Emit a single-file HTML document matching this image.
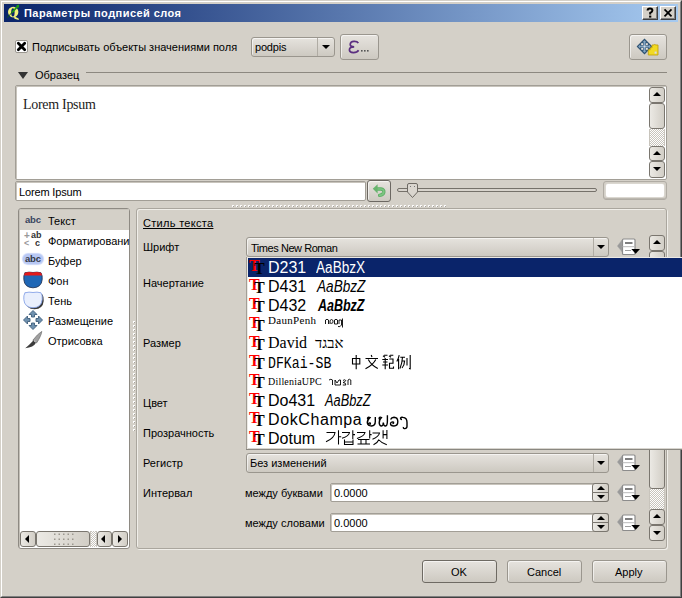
<!DOCTYPE html>
<html><head><meta charset="utf-8">
<style>
*{box-sizing:border-box;margin:0;padding:0}
html,body{width:682px;height:598px;overflow:hidden;background:#d4d0c8;font-family:"Liberation Sans",sans-serif;font-size:11px;color:#000}
.a{position:absolute}
svg{position:absolute;overflow:visible}
#win{left:0;top:0;width:682px;height:598px;border-style:solid;border-width:1px;border-color:#d4d0c8 #404040 #404040 #d4d0c8}
#win2{left:1px;top:1px;width:680px;height:596px;border-style:solid;border-width:1px;border-color:#fff #808080 #808080 #fff}
#title{left:4px;top:4px;width:674px;height:18px;background:linear-gradient(to right,#0a246a,#a6caf0)}
.tb{width:16px;height:14px;background:#d4d0c8;border-style:solid;border-width:1px;border-color:#fff #404040 #404040 #fff;box-shadow:inset -1px -1px 0 #808080}
.t{white-space:nowrap;line-height:13px}
.btn{border:1px solid #9a968e;border-radius:3px;background:linear-gradient(#e6e3de,#cdc9c1);box-shadow:inset 1px 1px 0 rgba(255,255,255,.6)}
.field{background:#fff;border:1px solid #a29e96;border-radius:2px;box-shadow:inset 1px 1px 0 #c8c4bc}
.frame{border:1px solid #aaa69e;border-radius:3px;box-shadow:inset 1px 1px 0 #f0eee9, 1px 1px 0 #f0eee9}
.sbtn{width:16px;border:1px solid #7a766f;border-radius:3px;background:linear-gradient(to right,#ebe9e4,#d2cec6)}
.chk{box-shadow:inset 1px 0 0 #c8c4bc,inset -1px 0 0 #c8c4bc;background-color:#fff;background-image:linear-gradient(45deg,#c8c4bc 25%,transparent 25%,transparent 75%,#c8c4bc 75%),linear-gradient(45deg,#c8c4bc 25%,transparent 25%,transparent 75%,#c8c4bc 75%);background-size:2px 2px;background-position:0 0,1px 1px}
.up{width:0;height:0;border-left:4px solid transparent;border-right:4px solid transparent;border-bottom:4px solid #000}
.dn{width:0;height:0;border-left:4px solid transparent;border-right:4px solid transparent;border-top:4px solid #000}
.lt{width:0;height:0;border-top:4px solid transparent;border-bottom:4px solid transparent;border-right:4px solid #000}
.rt{width:0;height:0;border-top:4px solid transparent;border-bottom:4px solid transparent;border-left:4px solid #000}
.dd .row{position:absolute;left:0;width:434px;height:19px}
.ff{font-size:16px;line-height:19px;white-space:nowrap;position:absolute;left:22px}
</style></head><body>
<div id="win" class="a"></div>
<div id="win2" class="a"></div>
<div id="title" class="a"></div>
<!-- Q icon -->
<svg style="left:0;top:0" width="24" height="24" viewBox="0 0 24 24">
 <ellipse cx="13.2" cy="12.1" rx="5.2" ry="5.3" fill="#f2f27c"/>
 <ellipse cx="12.9" cy="12.4" rx="1.7" ry="4.1" fill="#0c266c"/>
 <path d="M13.8 16 L18.6 18.4 L18.8 20 L14.5 18.8 Z" fill="#f2f27c"/>
 <path d="M7.2 17.7 L13 11.3" stroke="#116010" stroke-width="1"/>
 <path d="M12 12.5 L18.6 5.4" stroke="#1c9c12" stroke-width="1.8"/>
 <path d="M16.2 5.6 L19.2 4.6 L18.6 8 Z" fill="#1c9c12"/>
</svg>
<div class="a t" style="left:24px;top:7px;color:#fff;font-weight:bold;font-size:11px;letter-spacing:0.45px">Параметры подписей слоя</div>
<div class="a tb" style="left:642px;top:6px"></div>
<div class="a tb" style="left:660px;top:6px"></div>
<svg style="left:642px;top:6px" width="16" height="14" viewBox="0 0 16 14"><path d="M5.6 4.6 Q5.6 2.6 8 2.6 Q10.4 2.6 10.4 4.6 Q10.4 6 8.2 7 L8.2 8.6" fill="none" stroke="#000" stroke-width="2"/><rect x="7.1" y="9.6" width="2.2" height="2" fill="#000"/></svg>
<svg style="left:660px;top:6px" width="16" height="14"><path d="M4.5 3.3 L11.5 10.3 M11.5 3.3 L4.5 10.3" stroke="#000" stroke-width="1.7"/></svg>

<!-- checkbox row -->
<div class="a" style="left:15px;top:40px;width:13px;height:13px;background:#fff;border:1px solid #9a968f;border-radius:2px"></div>
<svg style="left:15px;top:40px" width="13" height="13"><path d="M3.3 3.3 L9.7 9.7 M9.7 3.3 L3.3 9.7" stroke="#000" stroke-width="2.8" stroke-linecap="round"/></svg>
<div class="a t" style="left:32px;top:41px">Подписывать объекты значениями поля</div>
<div class="a btn" style="left:251px;top:37px;width:84px;height:20px"></div>
<div class="a" style="left:317px;top:38px;width:1px;height:18px;background:#b0aca4"></div>
<div class="a dn" style="left:322px;top:45px"></div>
<div class="a t" style="left:255px;top:41px;letter-spacing:-0.2px">podpis</div>
<div class="a btn" style="left:340px;top:34px;width:39px;height:26px"></div>
<svg style="left:340px;top:34px" width="40" height="26" viewBox="0 0 40 26">
 <path d="M18.3 9.2 C17 6.5 10.5 6.5 10.2 10.2 C10 12.5 12.5 12.8 14.2 12.8 C11.5 12.8 9.3 13.8 9.4 16 C9.6 19.3 16.5 19.5 18.6 16.2" fill="none" stroke="#5b2f80" stroke-width="1.7"/>
 <rect x="21" y="16" width="1.6" height="1.6" fill="#555"/><rect x="24" y="16" width="1.6" height="1.6" fill="#555"/><rect x="27" y="16" width="1.6" height="1.6" fill="#555"/>
</svg>
<div class="a btn" style="left:629px;top:34px;width:38px;height:26px"></div>
<svg style="left:629px;top:34px" width="38" height="26" viewBox="0 0 38 26">
 <path d="M15.5 4.6 L23.4 12.5 L15.5 20.4 L7.6 12.5 Z" fill="#2e5272"/>
 <path d="M15.5 6.2 L17.5 8.2 L16.3 8.2 L16.3 11.7 L19.8 11.7 L19.8 10.5 L21.8 12.5 L19.8 14.5 L19.8 13.3 L16.3 13.3 L16.3 16.8 L17.5 16.8 L15.5 18.8 L13.5 16.8 L14.7 16.8 L14.7 13.3 L11.2 13.3 L11.2 14.5 L9.2 12.5 L11.2 10.5 L11.2 11.7 L14.7 11.7 L14.7 8.2 L13.5 8.2 Z" fill="#84a6c4"/>
 <rect x="12.2" y="9.2" width="2" height="2" fill="#e6e2da"/><rect x="16.8" y="9.2" width="2" height="2" fill="#e6e2da"/>
 <rect x="12.2" y="13.8" width="2" height="2" fill="#e6e2da"/><rect x="16.8" y="13.8" width="2" height="2" fill="#e6e2da"/>
 <rect x="14.6" y="11.6" width="1.8" height="1.8" fill="#d8dce0"/>
 <path d="M19.3 15.8 L21.2 15.8 L21.2 14 Q22.2 13.2 23 14 L23 11 L25 11 L25 10.8 Q25.8 10.2 26.6 10.8 L26.6 11 L29 11 L29 21 L19.3 21 Z" fill="#f2da22" stroke="#c4a410" stroke-width="0.9"/>
 <rect x="25.6" y="17.6" width="2" height="2" fill="#d8d8f0"/>
</svg>

<!-- header -->
<div class="a dn" style="left:18px;top:72px;border-left-width:5px;border-right-width:5px;border-top-width:7px;border-top-color:#333"></div>
<div class="a t" style="left:35px;top:69px">Образец</div>
<div class="a" style="left:86px;top:72px;width:581px;height:1px;background:#8c8880"></div>

<!-- preview -->
<div class="a field" style="left:15px;top:85px;width:652px;height:95px"></div>
<div class="a t" style="left:23px;top:97px;font-family:'Liberation Serif',serif;font-size:14px;line-height:16px;letter-spacing:-0.3px;color:#222">Lorem Ipsum</div>
<div class="a sbtn" style="left:649px;top:87px;height:16px"></div>
<div class="a up" style="left:653px;top:92px"></div>
<div class="a sbtn" style="left:649px;top:103px;height:26px"></div>
<div class="a chk" style="left:649px;top:129px;width:16px;height:17px"></div>
<div class="a sbtn" style="left:649px;top:146px;height:15px"></div>
<div class="a up" style="left:653px;top:151px"></div>
<div class="a sbtn" style="left:649px;top:161px;height:17px"></div>
<div class="a dn" style="left:653px;top:167px"></div>

<!-- text field row -->
<div class="a field" style="left:15px;top:181px;width:351px;height:20px"></div>
<div class="a t" style="left:19px;top:186px;letter-spacing:-0.15px">Lorem Ipsum</div>
<div class="a btn" style="left:367px;top:180px;width:24px;height:22px;border-color:#6c6862"></div>
<svg style="left:367px;top:180px" width="24" height="22" viewBox="0 0 24 22">
 <path d="M9.5 9 L14 9 Q17.2 9.3 16.8 12.3 Q16.4 14.8 12.6 15.4" fill="none" stroke="#5fae66" stroke-width="3.4" stroke-linecap="round"/>
 <path d="M9.5 9 L14 9 Q17.2 9.3 16.8 12.3 Q16.4 14.8 12.6 15.4" fill="none" stroke="#7cc682" stroke-width="1.6" stroke-linecap="round"/>
 <path d="M5.8 8.8 L10.6 4.2 L10.6 13.4 Z" fill="#68b46e"/>
</svg>
<div class="a" style="left:397px;top:188px;width:200px;height:4px;border:1px solid #75716a;border-radius:2px;background:#d8d4cd"></div>
<svg style="left:406px;top:182px" width="13" height="17" viewBox="0 0 13 17">
 <path d="M1.5 3 Q1.5 1.5 3 1.5 L10 1.5 Q11.5 1.5 11.5 3 L11.5 10 L6.5 15.5 L1.5 10 Z" fill="#dad6cf" stroke="#6e6a64" stroke-width="1"/>
 <rect x="4" y="4" width="1" height="1" fill="#777"/><rect x="8" y="4" width="1" height="1" fill="#777"/>
</svg>
<div class="a" style="left:603px;top:181px;width:64px;height:19px;border:1px solid #b0aca4;border-radius:3px;background:#d4d0c8;box-shadow:inset 0 -1px 0 #bcb8b0"></div>
<div class="a" style="left:606px;top:184px;width:58px;height:13px;background:#fff;border-radius:2px;box-shadow:0 0 0 0.5px #e0ddd8"></div>
<!-- splitter dots -->
<div class="a" style="left:232px;top:205px;width:214px;height:2px;background-image:linear-gradient(to right,#fff 2px,transparent 2px);background-size:4px 2px;opacity:.9"></div>
<div class="a" style="left:232px;top:206px;width:214px;height:1px;background-image:linear-gradient(to right,#a8a49c 1px,transparent 1px);background-size:4px 1px;background-position:1px 0"></div>

<!-- list -->
<div class="a field" style="left:18px;top:208px;width:112px;height:341px;border-radius:3px;border-color:#8e8a83;box-shadow:inset 1px 1px 0 #c4c0b8"></div>
<div class="a" style="left:20px;top:209px;width:109px;height:21px;background:#d4d0c8;box-shadow:inset 0 1px 0 #c8c4bc"></div>
<div class="a t" style="left:25px;top:213px;font-weight:bold;font-size:9.5px;color:#3a4660;letter-spacing:-0.2px">abc</div>
<div class="a t" style="left:48px;top:215px">Текст</div>
<div class="a t" style="left:24px;top:231px;font-weight:bold;font-size:10px;line-height:9px;color:#999">+</div>
<div class="a t" style="left:31px;top:231px;font-weight:bold;font-size:9px;line-height:9px;color:#333">ab</div>
<div class="a t" style="left:24px;top:239px;font-weight:bold;font-size:9px;line-height:9px;color:#999">&lt;</div>
<div class="a t" style="left:35px;top:239px;font-weight:bold;font-size:9px;line-height:9px;color:#333">c</div>
<div class="a t" style="left:48px;top:235px">Форматировани</div>
<div class="a" style="left:23px;top:254px;width:20px;height:10px;border-radius:5px;background:#b8c8f4;box-shadow:0 0 1px 1px #cad6f8"></div>
<div class="a t" style="left:25px;top:252px;font-weight:bold;font-size:9.5px;color:#343a48;letter-spacing:-0.2px">abc</div>
<div class="a t" style="left:48px;top:255px">Буфер</div>
<svg style="left:23px;top:271px" width="20" height="18" viewBox="0 0 20 18">
 <path d="M2 1.8 Q6 0.6 10 1.5 Q14 0.6 18 1.8 Q19.6 4.5 19.2 8.5 Q18.5 16.5 10 16.8 Q1.5 16.5 0.8 8.5 Q0.4 4.5 2 1.6 Z" fill="#1f67b6" stroke="#1a2a4a" stroke-width="0.8"/>
 <path d="M2 1.8 Q6 0.6 10 1.5 Q14 0.6 18 1.8 Q18.8 3 19 4.6 L1 4.6 Q1.2 3 2 1.6 Z" fill="#e41a1a"/>
</svg>
<div class="a t" style="left:48px;top:275px">Фон</div>
<svg style="left:23px;top:291px" width="21" height="19" viewBox="0 0 21 19">
 <path d="M3.5 3.4 Q7.5 2.2 11.5 3.1 Q15.5 2.2 19.5 3.4 Q21.1 6 20.7 10 Q20 18 11.5 18.3 Q3 18 2.3 10 Q1.9 6 3.5 3.2 Z" fill="#3a3a3a"/>
 <path d="M2 1.8 Q6 0.6 10 1.5 Q14 0.6 18 1.8 Q19.6 4.5 19.2 8.5 Q18.5 16.5 10 16.8 Q1.5 16.5 0.8 8.5 Q0.4 4.5 2 1.6 Z" fill="#e9effd" stroke="#88a4e8" stroke-width="0.9"/>
</svg>
<div class="a t" style="left:48px;top:295px">Тень</div>
<svg style="left:23px;top:310px" width="20" height="20" viewBox="0 0 20 20">
 <g fill="#7092b0" stroke="#3e5e7c" stroke-width="0.9">
 <path d="M10 0.5 L14 4.5 L11.5 4.5 L11.5 7 L8.5 7 L8.5 4.5 L6 4.5 Z"/>
 <path d="M10 19.5 L14 15.5 L11.5 15.5 L11.5 13 L8.5 13 L8.5 15.5 L6 15.5 Z"/>
 <path d="M0.5 10 L4.5 6 L4.5 8.5 L7 8.5 L7 11.5 L4.5 11.5 L4.5 14 Z"/>
 <path d="M19.5 10 L15.5 6 L15.5 8.5 L13 8.5 L13 11.5 L15.5 11.5 L15.5 14 Z"/>
 </g>
</svg>
<div class="a t" style="left:48px;top:315px">Размещение</div>
<svg style="left:23px;top:330px" width="20" height="20" viewBox="0 0 20 20">
 <path d="M18.8 1.4 Q18.2 6 13.6 12.9 L9.8 10.3 Q14.5 4 18.8 1.4 Z" fill="#a0a0a0" stroke="#707070" stroke-width="0.7"/>
 <path d="M10.4 10.6 L13.2 12.6 Q10.5 17.5 2.2 18.3 Q5.8 15.5 10.4 10.6 Z" fill="#3c3c3c"/>
 <path d="M11 10.8 L12.8 12.2" stroke="#ddd" stroke-width="1"/>
</svg>
<div class="a t" style="left:48px;top:335px">Отрисовка</div>
<!-- h scrollbar -->
<div class="a sbtn" style="left:20px;top:531px;width:16px;height:16px"></div>
<div class="a lt" style="left:25px;top:535px"></div>
<div class="a sbtn" style="left:36px;top:531px;width:54px;height:16px"></div>
<svg style="left:0;top:0" width="682" height="598" viewBox="0 0 682 598"><rect x="54.0" y="533.5" width="1.5" height="1.5" fill="#9c988f"/><rect x="54.0" y="538.5" width="1.5" height="1.5" fill="#9c988f"/><rect x="54.0" y="543.5" width="1.5" height="1.5" fill="#9c988f"/><rect x="58.5" y="533.5" width="1.5" height="1.5" fill="#9c988f"/><rect x="58.5" y="538.5" width="1.5" height="1.5" fill="#9c988f"/><rect x="58.5" y="543.5" width="1.5" height="1.5" fill="#9c988f"/><rect x="63.0" y="533.5" width="1.5" height="1.5" fill="#9c988f"/><rect x="63.0" y="538.5" width="1.5" height="1.5" fill="#9c988f"/><rect x="63.0" y="543.5" width="1.5" height="1.5" fill="#9c988f"/><rect x="67.5" y="533.5" width="1.5" height="1.5" fill="#9c988f"/><rect x="67.5" y="538.5" width="1.5" height="1.5" fill="#9c988f"/><rect x="67.5" y="543.5" width="1.5" height="1.5" fill="#9c988f"/><rect x="72.0" y="533.5" width="1.5" height="1.5" fill="#9c988f"/><rect x="72.0" y="538.5" width="1.5" height="1.5" fill="#9c988f"/><rect x="72.0" y="543.5" width="1.5" height="1.5" fill="#9c988f"/></svg>
<div class="a chk" style="left:90px;top:531px;width:7px;height:16px"></div>
<div class="a sbtn" style="left:97px;top:531px;width:15px;height:16px"></div>
<div class="a lt" style="left:101px;top:535px"></div>
<div class="a sbtn" style="left:112px;top:531px;width:16px;height:16px"></div>
<div class="a rt" style="left:118px;top:535px"></div>
<!-- v splitter dots -->
<div class="a" style="left:133px;top:321px;width:2px;height:110px;background-image:linear-gradient(#fff 2px,transparent 2px);background-size:2px 4px"></div>
<div class="a" style="left:134px;top:321px;width:1px;height:110px;background-image:linear-gradient(#a8a49c 1px,transparent 1px);background-size:1px 4px;background-position:0 1px"></div>

<!-- right panel -->
<div class="a frame" style="left:136px;top:208px;width:531px;height:341px"></div>
<div class="a t" style="left:143px;top:217px;text-decoration:underline;letter-spacing:0.3px">Стиль текста</div>
<div class="a t" style="left:143px;top:241px">Шрифт</div>
<div class="a t" style="left:143px;top:277px">Начертание</div>
<div class="a t" style="left:143px;top:337px">Размер</div>
<div class="a t" style="left:143px;top:397px">Цвет</div>
<div class="a t" style="left:143px;top:427px">Прозрачность</div>
<div class="a t" style="left:143px;top:457px">Регистр</div>
<div class="a t" style="left:143px;top:487px">Интервал</div>
<div class="a btn" style="left:246px;top:237px;width:363px;height:20px"></div>
<div class="a" style="left:593px;top:238px;width:1px;height:18px;background:#b0aca4"></div>
<div class="a dn" style="left:597px;top:245px"></div>
<div class="a t" style="left:251px;top:242px;letter-spacing:-0.45px">Times New Roman</div>
<div class="a btn" style="left:246px;top:453px;width:363px;height:20px"></div>
<div class="a" style="left:593px;top:454px;width:1px;height:18px;background:#b0aca4"></div>
<div class="a dn" style="left:597px;top:461px"></div>
<div class="a t" style="left:250px;top:457px">Без изменений</div>
<div class="a t" style="left:245px;top:487px">между буквами</div>
<div class="a field" style="left:330px;top:483px;width:279px;height:19px"></div>
<div class="a t" style="left:334px;top:487px">0.0000</div>
<div class="a sbtn" style="left:592px;top:483px;width:17px;height:10px;border-radius:3px 3px 0 0"></div>
<div class="a sbtn" style="left:592px;top:492px;width:17px;height:10px;border-radius:0 0 3px 3px"></div>
<div class="a up" style="left:597px;top:486px"></div>
<div class="a dn" style="left:597px;top:495px"></div>
<div class="a t" style="left:245px;top:517px">между словами</div>
<div class="a field" style="left:330px;top:513px;width:279px;height:19px"></div>
<div class="a t" style="left:334px;top:517px">0.0000</div>
<div class="a sbtn" style="left:592px;top:513px;width:17px;height:10px;border-radius:3px 3px 0 0"></div>
<div class="a sbtn" style="left:592px;top:522px;width:17px;height:10px;border-radius:0 0 3px 3px"></div>
<div class="a up" style="left:597px;top:516px"></div>
<div class="a dn" style="left:597px;top:525px"></div>
<!-- dd icons -->
<svg style="left:612px;top:236px" width="32" height="22" viewBox="0 0 32 22">
 <path d="M10 4 L5.3 10 L10 15.8 Z" fill="#999" stroke="#aaa" stroke-width="0.5"/>
 <rect x="10.5" y="3" width="12.5" height="15.5" rx="1" fill="#fff" stroke="#8c8c8c" stroke-width="1.2"/>
 <line x1="10.5" y1="10.7" x2="23" y2="10.7" stroke="#bbb" stroke-width="1"/>
 <line x1="13" y1="7" x2="20.5" y2="7" stroke="#555" stroke-width="1.5"/>
 <line x1="13" y1="14.5" x2="19" y2="14.5" stroke="#888" stroke-width="0.8"/>
 <path d="M19.3 13 L28 13 L23.7 17.8 Z" fill="#000"/>
</svg>
<svg style="left:612px;top:452px" width="32" height="22" viewBox="0 0 32 22">
 <path d="M10 4 L5.3 10 L10 15.8 Z" fill="#999" stroke="#aaa" stroke-width="0.5"/>
 <rect x="10.5" y="3" width="12.5" height="15.5" rx="1" fill="#fff" stroke="#8c8c8c" stroke-width="1.2"/>
 <line x1="10.5" y1="10.7" x2="23" y2="10.7" stroke="#bbb" stroke-width="1"/>
 <line x1="13" y1="7" x2="20.5" y2="7" stroke="#555" stroke-width="1.5"/>
 <line x1="13" y1="14.5" x2="19" y2="14.5" stroke="#888" stroke-width="0.8"/>
 <path d="M19.3 13 L28 13 L23.7 17.8 Z" fill="#000"/>
</svg>
<svg style="left:612px;top:482px" width="32" height="22" viewBox="0 0 32 22">
 <path d="M10 4 L5.3 10 L10 15.8 Z" fill="#999" stroke="#aaa" stroke-width="0.5"/>
 <rect x="10.5" y="3" width="12.5" height="15.5" rx="1" fill="#fff" stroke="#8c8c8c" stroke-width="1.2"/>
 <line x1="10.5" y1="10.7" x2="23" y2="10.7" stroke="#bbb" stroke-width="1"/>
 <line x1="13" y1="7" x2="20.5" y2="7" stroke="#555" stroke-width="1.5"/>
 <line x1="13" y1="14.5" x2="19" y2="14.5" stroke="#888" stroke-width="0.8"/>
 <path d="M19.3 13 L28 13 L23.7 17.8 Z" fill="#000"/>
</svg>
<svg style="left:612px;top:512px" width="32" height="22" viewBox="0 0 32 22">
 <path d="M10 4 L5.3 10 L10 15.8 Z" fill="#999" stroke="#aaa" stroke-width="0.5"/>
 <rect x="10.5" y="3" width="12.5" height="15.5" rx="1" fill="#fff" stroke="#8c8c8c" stroke-width="1.2"/>
 <line x1="10.5" y1="10.7" x2="23" y2="10.7" stroke="#bbb" stroke-width="1"/>
 <line x1="13" y1="7" x2="20.5" y2="7" stroke="#555" stroke-width="1.5"/>
 <line x1="13" y1="14.5" x2="19" y2="14.5" stroke="#888" stroke-width="0.8"/>
 <path d="M19.3 13 L28 13 L23.7 17.8 Z" fill="#000"/>
</svg>
<!-- right scrollbar -->
<div class="a sbtn" style="left:649px;top:235px;height:16px"></div>
<div class="a up" style="left:653px;top:240px"></div>
<div class="a sbtn" style="left:649px;top:251px;height:238px"></div>
<div class="a chk" style="left:649px;top:489px;width:16px;height:20px"></div>
<div class="a sbtn" style="left:649px;top:509px;height:16px"></div>
<div class="a up" style="left:653px;top:514px"></div>
<div class="a sbtn" style="left:649px;top:525px;height:16px"></div>
<div class="a dn" style="left:653px;top:531px"></div>

<!-- bottom buttons -->
<div class="a btn" style="left:422px;top:560px;width:75px;height:23px;border-color:#6e6a63"></div>
<div class="a btn" style="left:507px;top:560px;width:75px;height:23px"></div>
<div class="a btn" style="left:592px;top:560px;width:75px;height:23px"></div>
<div class="a t" style="left:451px;top:566px">OK</div>
<div class="a t" style="left:527px;top:566px">Cancel</div>
<div class="a t" style="left:615px;top:566px">Apply</div>

<!-- dropdown -->
<div class="a" style="left:246px;top:257px;width:436px;height:192px;background:#fff;border-left:1px solid #a29e96;box-shadow:inset 1px 1px 0 #ece9e4,inset 0 -1px 0 #d8d5cf,0 1px 0 #8a8780"></div>
<div class="a dd" style="left:248px;top:258px;width:434px;height:190px">
 <div class="row" style="top:0px;background:#0a246a;"><div class="a t" style="left:1px;top:1px;font-family:'Liberation Serif',serif;font-weight:bold;font-size:16px;line-height:14px;color:#f00">T</div><div class="a t" style="left:6px;top:4px;font-family:'Liberation Serif',serif;font-weight:bold;font-size:16px;line-height:14px;color:#000">T</div><div class="a t" style="left:20px;top:0;line-height:19px;color:#fff;font-size:16px">D231</div><div class="a t" style="left:68px;top:0;line-height:19px;color:#fff;transform:scaleX(0.85);transform-origin:0 0"><span style="font-size:16px">AaBbzX</span></div></div>
 <div class="row" style="top:19px;"><div class="a t" style="left:1px;top:1px;font-family:'Liberation Serif',serif;font-weight:bold;font-size:16px;line-height:14px;color:#f00">T</div><div class="a t" style="left:6px;top:4px;font-family:'Liberation Serif',serif;font-weight:bold;font-size:16px;line-height:14px;color:#000">T</div><div class="a t" style="left:20px;top:0;line-height:19px;color:#000;font-size:16px">D431</div><div class="a t" style="left:69px;top:0;line-height:19px;color:#000;transform:scaleX(0.85);transform-origin:0 0"><span style="font-size:16px;font-style:italic">AaBbzZ</span></div></div>
 <div class="row" style="top:38px;"><div class="a t" style="left:1px;top:1px;font-family:'Liberation Serif',serif;font-weight:bold;font-size:16px;line-height:14px;color:#f00">T</div><div class="a t" style="left:6px;top:4px;font-family:'Liberation Serif',serif;font-weight:bold;font-size:16px;line-height:14px;color:#000">T</div><div class="a t" style="left:20px;top:0;line-height:19px;color:#000;font-size:16px">D432</div><div class="a t" style="left:70px;top:0;line-height:19px;color:#000;transform:scaleX(0.78);transform-origin:0 0"><span style="font-size:16px;font-style:italic;font-weight:bold">AaBbzZ</span></div></div>
 <div class="row" style="top:57px;"><div class="a t" style="left:1px;top:1px;font-family:'Liberation Serif',serif;font-weight:bold;font-size:16px;line-height:14px;color:#f00">T</div><div class="a t" style="left:6px;top:4px;font-family:'Liberation Serif',serif;font-weight:bold;font-size:16px;line-height:14px;color:#000">T</div><div class="a t" style="left:20px;top:0;line-height:19px;color:#000;font-family:'Liberation Serif',serif;font-size:11px;top:-4px;letter-spacing:0.3px">DaunPenh</div><svg class="glyph3" style="left:76px;top:0" width="70" height="19"></svg></div>
 <div class="row" style="top:76px;"><div class="a t" style="left:1px;top:1px;font-family:'Liberation Serif',serif;font-weight:bold;font-size:16px;line-height:14px;color:#f00">T</div><div class="a t" style="left:6px;top:4px;font-family:'Liberation Serif',serif;font-weight:bold;font-size:16px;line-height:14px;color:#000">T</div><div class="a t" style="left:20px;top:0;line-height:19px;color:#000;font-family:'Liberation Serif',serif;font-size:16px;top:-1px">David</div><div class="a t" style="left:67px;top:0;line-height:19px;color:#000;transform:scaleX(1);transform-origin:0 0"><span style="font-family:'Liberation Serif',serif;font-size:15px">אבגד</span></div></div>
 <div class="row" style="top:95px;"><div class="a t" style="left:1px;top:1px;font-family:'Liberation Serif',serif;font-weight:bold;font-size:16px;line-height:14px;color:#f00">T</div><div class="a t" style="left:6px;top:4px;font-family:'Liberation Serif',serif;font-weight:bold;font-size:16px;line-height:14px;color:#000">T</div><div class="a t" style="left:20px;top:0;line-height:19px;color:#000;font-family:'Liberation Mono',monospace;font-size:16.5px;top:1px;transform:scaleX(.8);transform-origin:0 0">DFKai-SB</div><svg class="glyph5" style="left:103px;top:0" width="70" height="19"></svg></div>
 <div class="row" style="top:114px;"><div class="a t" style="left:1px;top:1px;font-family:'Liberation Serif',serif;font-weight:bold;font-size:16px;line-height:14px;color:#f00">T</div><div class="a t" style="left:6px;top:4px;font-family:'Liberation Serif',serif;font-weight:bold;font-size:16px;line-height:14px;color:#000">T</div><div class="a t" style="left:20px;top:0;line-height:19px;color:#000;font-family:'Liberation Serif',serif;font-size:10px;top:0px;letter-spacing:0.2px">DilleniaUPC</div><svg class="glyph6" style="left:80px;top:0" width="70" height="19"></svg></div>
 <div class="row" style="top:133px;"><div class="a t" style="left:1px;top:1px;font-family:'Liberation Serif',serif;font-weight:bold;font-size:16px;line-height:14px;color:#f00">T</div><div class="a t" style="left:6px;top:4px;font-family:'Liberation Serif',serif;font-weight:bold;font-size:16px;line-height:14px;color:#000">T</div><div class="a t" style="left:20px;top:0;line-height:19px;color:#000;font-size:16px">Do431</div><div class="a t" style="left:77px;top:0;line-height:19px;color:#000;transform:scaleX(0.8);transform-origin:0 0"><span style="font-size:16px;font-style:italic">AaBbzZ</span></div></div>
 <div class="row" style="top:152px;"><div class="a t" style="left:1px;top:1px;font-family:'Liberation Serif',serif;font-weight:bold;font-size:16px;line-height:14px;color:#f00">T</div><div class="a t" style="left:6px;top:4px;font-family:'Liberation Serif',serif;font-weight:bold;font-size:16px;line-height:14px;color:#000">T</div><div class="a t" style="left:20px;top:0;line-height:19px;color:#000;font-size:16px;letter-spacing:0.6px">DokChampa</div><svg class="glyph8" style="left:118px;top:0" width="70" height="19"></svg></div>
 <div class="row" style="top:171px;"><div class="a t" style="left:1px;top:1px;font-family:'Liberation Serif',serif;font-weight:bold;font-size:16px;line-height:14px;color:#f00">T</div><div class="a t" style="left:6px;top:4px;font-family:'Liberation Serif',serif;font-weight:bold;font-size:16px;line-height:14px;color:#000">T</div><div class="a t" style="left:20px;top:0;line-height:19px;color:#000;font-size:16px">Dotum</div><svg class="glyph9" style="left:77px;top:0" width="70" height="19"></svg></div>
</div>
<svg style="left:0;top:0" width="682" height="598" viewBox="0 0 682 598" fill="none" stroke="#000" stroke-width="1.1">
 <!-- Khmer DaunPenh -->
 <g stroke-width="0.9">
 <path d="M325.5 324 L325.5 320 Q327 318.5 328.5 320 L328.5 324 M330 324 L330 320.5 Q331.5 318.5 333 320.5 L333 322.5 Q332 324 330.5 323"/>
 <path d="M334.5 320 Q336 318.5 337.5 320 L337.5 324 L334.5 324 Z M339 324 L339 320 L341.5 320 L341.5 325 Q340 327.5 338 326.5 M342.5 318.5 L342.5 327.5"/>
 </g>
 <!-- Hebrew handled by text -->
 <!-- CJK DFKai-SB -->
 <g stroke-width="1.1">
 <path d="M352.5 358.5 L359.8 358.5 L359.8 364 L352.5 364 Z M356.2 355 L356.2 369.2"/>
 <path d="M371.2 355 L372 357 M365.5 358.5 L378 358.5 M368.3 359.5 Q371 365 377.8 368.5 M375.8 359.5 Q373 365 365.5 368.8"/>
 <path d="M383 355.8 L385 357.2 M384 355.3 L387.5 355.3 M389 355.8 L391 357.2 M390 355.3 L393.3 355.3 M382.3 359.5 L388 359.5 M383 362 L387.5 362 M382.3 365 L388 365 M385.2 358 L385.2 369.2 M389.3 359 L393 359 L393 363.2 L389.5 363.2 L389.5 368.3 L393.5 368.3 L393.5 366.5"/>
 <path d="M399.2 355.2 Q398.5 359 396.8 361.5 M398.6 359 L398.6 369.2 M400.3 357.3 L405 357.3 M402.5 357.3 Q402 364 400 368.5 M401.5 361 L404.6 361 Q404.5 365 402 368 M407 358 L407 365.5 M410.2 355 L410.2 368.8 L409 368.5"/>
 </g>
 <!-- Thai DilleniaUPC -->
 <g stroke-width="0.9">
 <path d="M329 380 Q331 378.5 332.5 380 L332.5 385 M335 385 L335 380 L337 383 L339 380 L340.5 380 L340.5 385 L335 385"/>
 <path d="M343 380.5 Q344.5 379 345.8 380.5 Q344.5 382.5 343 382.5 Q346 382.5 345.8 385 L342.8 385 M348 385 L348 380 Q349.5 378.5 350.8 380 L350.8 385"/>
 </g>
 <!-- Lao DokChampa -->
 <g stroke-width="1.4">
 <path d="M369 419.5 Q367.2 419.3 367.6 417.9 Q368.5 416.6 370 417.6 Q367.2 419.5 367.3 423 Q367.8 426 371.5 426 Q375.3 425.8 375.3 421.5 L375.3 417"/>
 <path d="M368.6 424.6 Q368.3 422.6 370 422.9 Q371 423.6 369.6 424.8"/>
 <path d="M380.5 419.5 Q378.8 419.3 379.2 417.9 Q380 416.6 381.5 417.6 Q379 420 379.2 423 Q379.5 426 381.5 426 Q383.3 425.8 383.3 422.5 Q383.5 426 385.5 426 Q387.4 425.8 387.4 421 L387.4 415.3"/>
 <path d="M390.6 419.5 Q391.5 417.2 394 417.2 Q397.8 417.4 397.8 421.5 Q397.8 426 394 426 Q390.5 426 390.5 423.8 Q390.7 421.5 393.5 422.2 Q394 423.5 392.5 423.8"/>
 <path d="M402 419.5 Q400.3 419.3 400.6 417.9 Q401.5 416.8 403 417.4 Q405 417.5 406.2 419 Q407 420.5 407 422.5 L407 426.5 Q406.8 428.8 404.5 428.6 Q403 428.3 403.5 427"/>
 </g>
 <!-- Korean Dotum -->
 <g stroke-width="1.05">
 <path d="M326.5 432.5 L335 432.5 Q334.5 438 326 441.8 M338.5 430.3 L338.5 444.6 M338.5 436.8 L341.2 436.8"/>
 <path d="M342 432.5 L349.5 432.5 Q349 436 342 438.2 M352.8 430.3 L352.8 439 M352.8 434.6 L355 434.6 M344.5 439.5 L344.5 444.5 L353 444.5 L353 439.5 M344.5 442 L353 442"/>
 <path d="M357 432.5 L365 432.5 Q364.5 436 357 438.5 M369.7 430.3 L369.7 438.6 M369.7 434.6 L371.6 434.6 M358 439.5 L369.5 439.5 M361 439.5 L361 443.6 M366 439.5 L366 443.6 M357.5 443.9 L370 443.9"/>
 <path d="M372.5 433 L379.5 433 Q379 436.5 372.5 439.2 M383.1 430.3 L383.1 438.6 M386.9 430 L386.9 439 M383.1 434.6 L386.9 434.6 M379 439.5 Q377.5 443 373.5 444.8 M379 440 Q381.5 443 386.8 444.8"/>
 </g>
</svg>
</body></html>
